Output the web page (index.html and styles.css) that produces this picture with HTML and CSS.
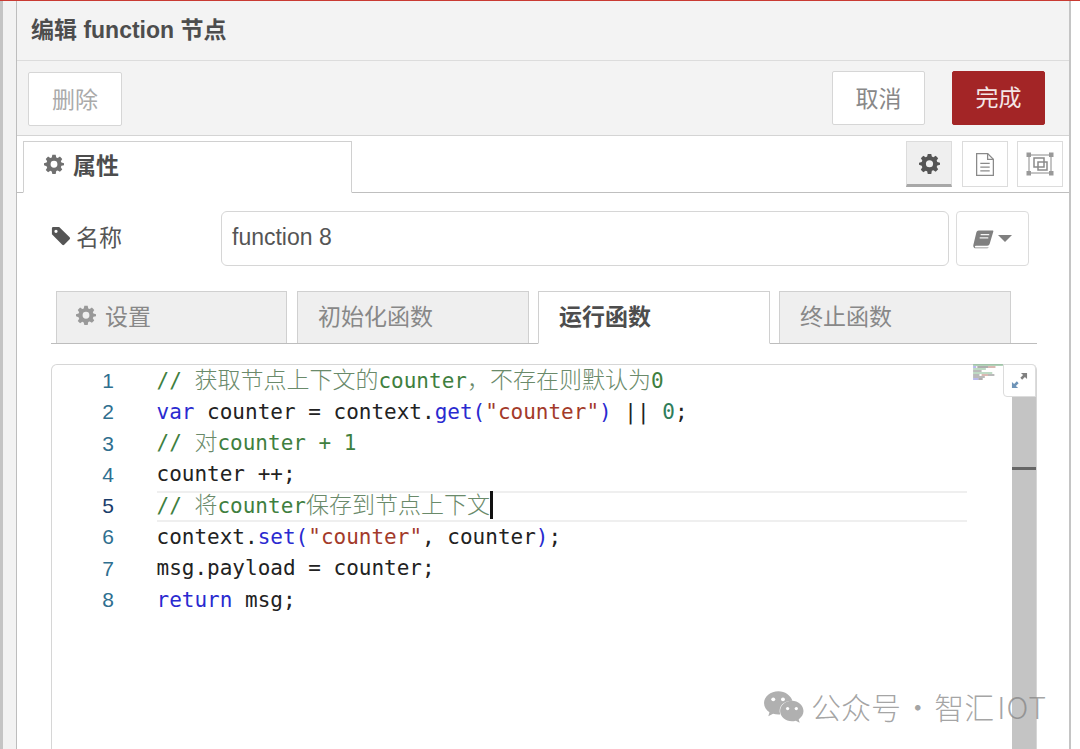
FILE: index.html
```html
<!DOCTYPE html>
<html lang="zh">
<head>
<meta charset="utf-8">
<title>编辑 function 节点</title>
<link rel="stylesheet" href="styles.css">
</head>
<body>
<div class="app">
  <div class="side-left"></div>
  <main class="dialog">
    <header class="title">编辑 function 节点</header>
    <div class="toolbar">
      <button class="btn btn-del">删除</button>
      <div class="toolbar-right">
        <button class="btn btn-cancel">取消</button>
        <button class="btn btn-done">完成</button>
      </div>
    </div>
    <div class="tabs">
      <div class="tab-main">
        <svg class="gear" viewBox="0 0 24 24"><use href="#gear"/></svg>
        <span>属性</span>
      </div>
      <div class="tab-tools">
        <div class="tool tool-on"><svg class="gear-tool" viewBox="0 0 24 24"><use href="#gear"/></svg></div>
        <div class="tool">
          <svg class="tool-svg" viewBox="3 1 18 22" fill="none" stroke="#8a8a8a" stroke-width="1.200">
            <path d="M4 1.500h10.500L20 7v15.500H4z"/><path d="M14.500 1.500V7H20"/><path d="M7.500 11h9M7.500 14.500h9M7.500 18h9"/>
          </svg>
        </div>
        <div class="tool tool-last">
          <svg class="tool-svg wide" viewBox="0 0 28 24" fill="none" stroke="#8a8a8a" stroke-width="1">
            <path d="M3 3h22v18H3z"/>
            <path d="M8 6h10v9H8z" stroke-width="1.500"/><path d="M12 10h9v8h-9z" stroke-width="1.500"/>
            <g fill="#999" stroke="none"><rect x="0.500" y="0.500" width="4.500" height="4.500"/><rect x="23" y="0.500" width="4.500" height="4.500"/><rect x="0.500" y="19" width="4.500" height="4.500"/><rect x="23" y="19" width="4.500" height="4.500"/></g>
          </svg>
        </div>
      </div>
    </div>
    <section class="body">
      <div class="name-row">
        <label class="name-label">
          <svg class="tag" viewBox="0 0 22 22"><path fill="#555" d="M1 2.500A1.500 1.500 0 0 1 2.500 1H9l11.500 11.500a1.500 1.500 0 0 1 0 2.100l-6 6a1.500 1.500 0 0 1-2.100 0L1 9zM5.500 4A1.800 1.800 0 1 0 5.500 7.600 1.800 1.800 0 0 0 5.500 4z" fill-rule="evenodd"/></svg>
          <span>名称</span>
        </label>
        <div class="name-input">function 8</div>
        <button class="book-btn">
          <svg class="book" viewBox="0 0 22 20"><path fill="#808080" d="M6 1h14.500c.6 0 1 .5.800 1.100L17.500 15c-.4 1.300-1.200 2-2.600 2H3.500C2.500 17 2 17.500 2 18s.5 1 1.200 1h13.300c-.3.500-.8.800-1.500.8H3C1.300 19.800 0 18.500.3 16.500L3.500 3.200C3.900 1.800 4.700 1 6 1z"/><path stroke="#f4f4f4" stroke-width="1.300" d="M8 5.500h9M7 8.800h9"/></svg>
          <span class="caret"></span>
        </button>
      </div>
      <div class="subtabs">
        <div class="subtab subtab-first"><svg class="gear sub-gear" viewBox="0 0 24 24"><use href="#gear"/></svg><span>设置</span></div>
        <div class="subtab">初始化函数</div>
        <div class="subtab subtab-on">运行函数</div>
        <div class="subtab">终止函数</div>
      </div>
      <div class="editor">
        <div class="gutter">
          <div>1</div><div>2</div><div>3</div><div>4</div><div class="cur">5</div><div>6</div><div>7</div><div>8</div>
        </div>
        <div class="code">
          <div class="ln c">// <span class="z">获取节点上下文的</span>counter<span class="z">，不存在则默认为</span>0</div>
          <div class="ln"><span class="k">var</span> counter = context.<span class="k">get</span><span class="k">(</span><span class="s">"counter"</span><span class="k">)</span> || <span class="n">0</span>;</div>
          <div class="ln c">// <span class="z">对</span>counter + 1</div>
          <div class="ln">counter ++;</div>
          <div class="ln c ln-cur">// <span class="z">将</span>counter<span class="z">保存到节点上下文</span><i class="cursor"></i></div>
          <div class="ln">context.<span class="k">set</span><span class="k">(</span><span class="s">"counter"</span>, counter<span class="k">)</span>;</div>
          <div class="ln">msg.payload = counter;</div>
          <div class="ln"><span class="k">return</span> msg;</div>
        </div>
        <svg class="minimap" viewBox="0 0 30 16" preserveAspectRatio="none">
          <g stroke-width="1.200">
            <path stroke="#7fb58a" d="M1 1h28"/><path stroke="#8a8ae0" d="M1 3h3"/><path stroke="#777" d="M5 3h10"/><path stroke="#c08a80" d="M15 3h7"/>
            <path stroke="#7fb58a" d="M1 5h12M1 9h18"/><path stroke="#777" d="M1 7h8M1 11h6"/><path stroke="#c08a80" d="M9 11h6"/><path stroke="#777" d="M15 11h6M1 13h11"/><path stroke="#8a8ae0" d="M1 15h5"/><path stroke="#777" d="M6 15h4"/>
          </g>
        </svg>
        <button class="expand">
          <svg viewBox="0 0 18 18" class="expand-svg">
            <path fill="#808080" d="M17 1v6.500l-2.300-2.300-2.900 2.900-1.900-1.900 2.900-2.900L10.500 1z"/>
            <path fill="#6f94b8" d="M1 17v-6.500l2.300 2.300 2.900-2.900 1.900 1.900-2.900 2.900L7.500 17z"/>
          </svg>
        </button>
        <div class="scrollbar"><div class="thumb-line"></div></div>
      </div>
    </section>
  </main>
  <div class="side-right"></div>
</div>
<div class="watermark">
  <svg class="wechat" viewBox="0 0 40 32">
    <path fill="#b0b0b0" d="M15 1C7.300 1 1 6.200 1 12.600c0 3.700 2.100 6.900 5.300 9L5.200 25.500l4.600-2.400c1.600.5 3.300.8 5.200.8.600 0 1.200 0 1.800-.1C14.500 15.500 20 10.500 28.700 10.300 27 5 21.500 1 15 1z"/>
    <path fill="#b0b0b0" d="M39.500 20.500c0-5.700-5.300-10-11.300-10-6.300 0-11.500 4.300-11.500 10s5.200 10 11.500 10c1.300 0 2.600-.2 3.800-.6l3.800 2-1-3.300c2.800-2 4.700-4.800 4.700-8.100z"/>
    <g fill="#fff"><circle cx="10" cy="9" r="1.900"/><circle cx="19.500" cy="9" r="1.900"/><circle cx="24" cy="18" r="1.600"/><circle cx="32.500" cy="18" r="1.600"/></g>
  </svg>
  <span class="wm-text">公众号 · 智汇<span class="wm-latin">IOT</span></span>
</div>
<svg class="defs" width="0" height="0">
  <defs>
    <path id="gear" fill-rule="evenodd" d="M10 1h4l.7 3.100 1.700.7 2.700-1.700 2.800 2.800-1.700 2.700.7 1.700L24 11v2.500l-3.100.7-.7 1.700 1.700 2.700-2.800 2.800-2.700-1.700-1.700.7L14 24h-4l-.7-3.100-1.700-.7-2.700 1.700-2.800-2.800 1.700-2.700-.7-1.700L0 13.500V11l3.100-.7.700-1.700-1.700-2.700 2.800-2.800 2.700 1.700 1.700-.7zM12 8.200a4.100 4.100 0 1 0 0 8.200 4.100 4.100 0 0 0 0-8.200z"/>
  </defs>
</svg>
</body>
</html>
```

FILE: styles.css
```css
* { box-sizing: border-box; }
html, body { margin: 0; height: 749px; overflow: hidden; background: #fff; }
body { font-family: "Liberation Sans", "Noto Sans CJK SC", sans-serif; color: #555; position: relative; }
button { font-family: inherit; }
.defs { position: absolute; }
.app { display: flex; height: 749px; border-top: 1px solid #c93a32; }
.side-left { width: 17px; flex: none; background: linear-gradient(90deg, #c4c4c4 0 3px, #f2f2f2 3px); border-right: 1px solid #bdbdbd; }
.side-right { flex: 1; background: #fff; border-left: 2px solid #c4c4c4; }
.dialog { width: 1052px; flex: none; display: flex; flex-direction: column; background: #fff; }
.title { height: 60px; background: #f3f3f3; border-bottom: 1px solid #dcdcdc; padding: 14px 0 0 14px; font-size: 23px; font-weight: 700; line-height: 30px; color: #4d4d4d; }
.toolbar { height: 75px; background: #f3f3f3; border-bottom: 1px solid #d4d4d4; display: flex; justify-content: space-between; padding: 10px 24px 0 11px; }
.toolbar-right { display: flex; gap: 27px; }
.btn { width: 94px; height: 54px; font-size: 23px; background: #fff; border: 1px solid #d6d6d6; border-radius: 2px; color: #999; padding: 0 0 3px; }
.btn-del { margin-top: 1px; color: #aaa; width: 94px; }
.btn-cancel { color: #888; width: 93px; }
.btn-done { background: #a32526; border-color: #a32526; color: #f4e6e6; width: 93px; padding-bottom: 4px; }
.tabs { height: 57px; background: #fff; border-bottom: 1px solid #bfbfbf; display: flex; justify-content: space-between; padding: 5px 6px 0 6px; }
.tab-main { width: 329px; height: 52px; background: #fff; border: 1px solid #d0d0d0; border-bottom: 1px solid #fff; display: flex; align-items: center; gap: 9px; padding: 0 0 7px 20px; font-size: 23px; font-weight: 700; color: #4d4d4d; }
.gear { width: 20px; height: 20px; fill: #707070; }
.tab-tools { display: flex; gap: 10px; }
.tool { width: 46px; height: 46px; border: 1px solid #dcdcdc; display: flex; align-items: center; justify-content: center; background: #fff; }
.tool-last { margin-left: -1px; }
.tool-on { background: #efefef; border-bottom: 3px solid #a8a8a8; }
.gear-tool { width: 21px; height: 21px; fill: #555; }
.tool-svg { width: 20px; height: 23px; }
.tool-svg.wide { width: 28px; height: 24px; }
.body { flex: 1; padding: 18px 32px 0 34px; display: flex; flex-direction: column; overflow: hidden; }
.name-row { display: flex; align-items: flex-start; height: 55px; }
.name-label { width: 170px; display: flex; align-items: center; gap: 5px; height: 50px; font-size: 23px; color: #555; }
.tag { width: 20px; height: 20px; }
.name-input { width: 728px; height: 55px; border: 1px solid #d6d6d6; border-radius: 6px; font-size: 23px; line-height: 51px; padding-left: 10px; color: #555; }
.book-btn { width: 73px; height: 55px; margin-left: 7px; background: #fff; border: 1px solid #dcdcdc; border-radius: 4px; display: flex; align-items: center; justify-content: center; gap: 4px; padding: 0; }
.book { width: 21px; height: 20px; }
.caret { width: 0; height: 0; border: 7px solid transparent; border-top: 7px solid #808080; border-bottom: 0; }
.subtabs { display: flex; gap: 9px; margin-top: 25px; height: 53px; border-bottom: 1px solid #bdbdbd; padding-left: 5px; }
.subtab { width: 232px; height: 52px; background: #efefef; border: 1px solid #d0d0d0; border-bottom: 0; display: flex; align-items: center; gap: 10px; padding: 0 0 5px 20px; font-size: 23px; color: #888; }
.subtab-first { gap: 9px; padding-left: 19px; width: 231px; margin-right: 1px; }
.subtab-on { background: #fff; color: #4d4d4d; font-weight: 700; height: 53px; border-bottom: 1px solid #fff; }
.sub-gear { fill: #999; }
.editor { position: relative; margin-top: 20px; flex: 1; border: 1px solid #d6d6d6; border-bottom: 0; border-radius: 6px 6px 0 0; display: flex; font-family: "DejaVu Sans Mono", "Noto Sans CJK SC", monospace; font-size: 21px; line-height: 31.300px; }
.gutter { width: 62px; flex: none; text-align: right; color: #2f6f8f; font-size: 21px; font-family: "Liberation Sans", sans-serif; padding-top: 0; }
.gutter .cur { color: #1a3d6b; }
.code { flex: 1; padding: 0.500px 69px 0 42.500px; color: #222; }
.ln { height: 31.300px; white-space: pre; }
.c { color: #3f7f3f; }
.z { font-family: "Noto Sans CJK SC", sans-serif; font-size: 23px; font-weight: 300; line-height: 0; color: #6a8a6a; }
.k { color: #2a2ad0; }
.s { color: #a33a2a; }
.n { color: #2e7d5b; }
.ln-cur { box-shadow: inset 0 2px 0 #efefef, inset 0 -2px 0 #efefef; }
.cursor { display: inline-block; width: 3px; height: 28px; background: #111; vertical-align: -6px; }
.minimap { position: absolute; top: -1px; right: 32px; width: 32px; height: 16px; }
.expand { position: absolute; top: -1px; right: 0; width: 33px; height: 33px; background: #fff; border: 1px solid #dcdcdc; border-radius: 0 4px 0 4px; padding: 0; display: flex; align-items: center; justify-content: center; z-index: 2; }
.expand-svg { width: 17px; height: 17px; }
.scrollbar { position: absolute; top: 31px; right: 0; bottom: 0; width: 24px; background: #c4c4c4; }
.thumb-line { margin-top: 71px; height: 3px; background: #666; }
.watermark { position: absolute; left: 763px; top: 684px; display: flex; align-items: center; gap: 7px; z-index: 5; }
.wechat { width: 41px; height: 33px; }
.wm-text { font-size: 30px; word-spacing: -5px; color: rgba(130,130,130,.72); font-family: "Noto Sans CJK SC", sans-serif; font-weight: 300; white-space: nowrap; }
.wm-latin { margin-left: 3px; letter-spacing: 1px; }
```
